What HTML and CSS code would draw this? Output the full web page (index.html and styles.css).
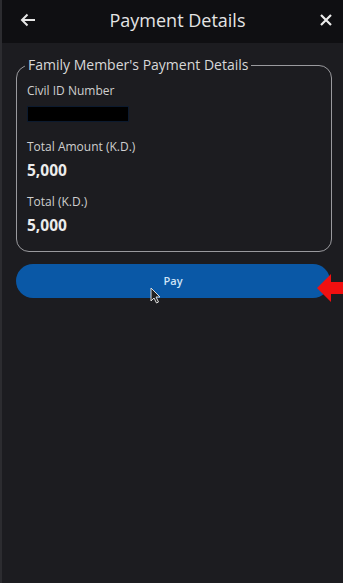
FILE: index.html
```html
<!DOCTYPE html>
<html>
<head>
<meta charset="utf-8">
<link rel="stylesheet" href="styles.css">
</head>
<body>
<div class="screen">
  <header class="topbar">
    <svg class="icon" width="16" height="14" viewBox="0 0 16 14"><path d="M15 7H2M7.5 1.5L2 7l5.5 5.5" fill="none" stroke="#e6e6e6" stroke-width="2"/></svg>
    <h1 class="title">Payment Details</h1>
    <svg class="icon" width="14" height="14" viewBox="0 0 14 14"><path d="M2 2l10 10M12 2L2 12" fill="none" stroke="#ececec" stroke-width="2.2"/></svg>
  </header>
  <main class="content">
    <fieldset class="card">
      <legend class="legend">Family Member's Payment Details</legend>
      <div class="label">Civil ID Number</div>
      <div class="masked"></div>
      <div class="label gap">Total Amount (K.D.)</div>
      <div class="value">5,000</div>
      <div class="label gap2">Total (K.D.)</div>
      <div class="value">5,000</div>
    </fieldset>
    <div class="pay-row">
      <button class="pay">Pay</button>
      <svg class="cursor" width="12" height="17" viewBox="0 0 12 17"><path d="M1 1v13l3-3 2.5 5 2-1-2.5-5H10z" fill="#222" stroke="#ddd" stroke-width="1"/></svg>
      <svg class="red-arrow" width="28" height="30" viewBox="0 0 28 30"><path d="M0 15L14 1v8h14v12H14v8z" fill="#f01010"/></svg>
    </div>
  </main>
</div>
</body>
</html>
```
FILE: styles.css
```css
html, body {
  margin: 0;
  padding: 0;
  background: #1c1c20;
}
body {
  font-family: "Open Sans", "Noto Sans", sans-serif;
  color: #e0e0e0;
}
.screen {
  width: 343px;
  height: 583px;
  border-left: 2px solid #2c2c30;
  box-sizing: border-box;
}
.topbar {
  height: 43px;
  background: #0f0f12;
  display: flex;
  align-items: center;
  justify-content: space-between;
  padding: 0 10px 4px 18px;
  box-sizing: border-box;
}
.title {
  margin: 0;
  font-size: 18px;
  font-weight: 400;
  color: #e4e4e4;
}
.icon { display: block; }
.content {
  padding: 13px 11px 0 14px;
}
.card {
  margin: 0;
  border: 1.5px solid #9a9a9e;
  border-radius: 13px;
  padding: 9px 10px 16px 10px;
}
.legend {
  font-size: 14px;
  color: #d8d8d8;
  padding: 0 3px;
  margin-left: -2px;
  line-height: 18px;
}
.label {
  font-size: 12px;
  color: #cfcfcf;
  line-height: 16px;
}
.gap { margin-top: 17px; }
.gap2 { margin-top: 14px; }
.masked {
  width: 100px;
  height: 14px;
  margin-top: 7px;
  background: #000;
  border: 1px solid #0c1a2e;
}
.value {
  font-size: 15.5px;
  font-weight: 700;
  color: #ececec;
  margin-top: 5px;
  line-height: 20px;
}
.pay-row {
  position: relative;
  margin-top: 12px;
}
.pay {
  display: block;
  width: 314px;
  height: 34px;
  border: none;
  border-radius: 17px;
  background: #0a58a6;
  color: #cfe4f7;
  font-family: "Open Sans", "Noto Sans", sans-serif;
  font-size: 11px;
  font-weight: 600;
  padding: 0 0 2px 0;
}
.cursor {
  position: absolute;
  left: 134px;
  top: 23px;
}
.red-arrow {
  position: absolute;
  left: 301px;
  top: 9px;
}
```
